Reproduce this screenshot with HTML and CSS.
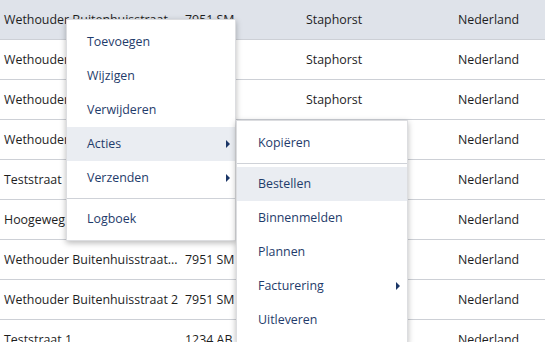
FILE: index.html
```html
<!DOCTYPE html>
<html>
<head>
  <link rel="stylesheet" href="styles.css">
</head>
<body>
  <div class="grid">
    <div class="row selected">
      <div class="cell street">Wethouder Buitenhuisstraat...</div>
      <div class="cell postcode">7951 SM</div>
      <div class="cell city">Staphorst</div>
      <div class="cell country">Nederland</div>
    </div>
    <div class="row">
      <div class="cell street">Wethouder Buitenhuisstraat 4</div>
      <div class="cell postcode">7951 SM</div>
      <div class="cell city">Staphorst</div>
      <div class="cell country">Nederland</div>
    </div>
    <div class="row">
      <div class="cell street">Wethouder Buitenhuisstraat 6</div>
      <div class="cell postcode">7951 SM</div>
      <div class="cell city">Staphorst</div>
      <div class="cell country">Nederland</div>
    </div>
    <div class="row">
      <div class="cell street">Wethouder Buitenhuisstraat 8</div>
      <div class="cell postcode">7951 SM</div>
      <div class="cell city">Staphorst</div>
      <div class="cell country">Nederland</div>
    </div>
    <div class="row">
      <div class="cell street">Teststraat 1</div>
      <div class="cell postcode">1234 AB</div>
      <div class="cell city">Teststad</div>
      <div class="cell country">Nederland</div>
    </div>
    <div class="row">
      <div class="cell street">Hoogeweg 12</div>
      <div class="cell postcode">7951 AA</div>
      <div class="cell city">Staphorst</div>
      <div class="cell country">Nederland</div>
    </div>
    <div class="row">
      <div class="cell street">Wethouder Buitenhuisstraat...</div>
      <div class="cell postcode">7951 SM</div>
      <div class="cell city">Staphorst</div>
      <div class="cell country">Nederland</div>
    </div>
    <div class="row">
      <div class="cell street">Wethouder Buitenhuisstraat 2</div>
      <div class="cell postcode">7951 SM</div>
      <div class="cell city">Staphorst</div>
      <div class="cell country">Nederland</div>
    </div>
    <div class="row">
      <div class="cell street">Teststraat  1</div>
      <div class="cell postcode">1234 AB</div>
      <div class="cell city">Teststad</div>
      <div class="cell country">Nederland</div>
    </div>
  </div>

  <ul class="menu main-menu">
    <li class="item">Toevoegen</li>
    <li class="item">Wijzigen</li>
    <li class="item">Verwijderen</li>
    <li class="item active has-sub">Acties</li>
    <li class="item has-sub">Verzenden</li>
    <li class="divider"></li>
    <li class="item">Logboek</li>
  </ul>

  <ul class="menu sub-menu">
    <li class="item">Kopiëren</li>
    <li class="divider"></li>
    <li class="item active">Bestellen</li>
    <li class="item">Binnenmelden</li>
    <li class="item">Plannen</li>
    <li class="item has-sub">Facturering</li>
    <li class="item">Uitleveren</li>
  </ul>
</body>
</html>
```

FILE: styles.css
```css
body {
  margin: 0;
  font-family: "Open Sans", Arial, sans-serif;
  font-size: 12.4px;
  color: #1e1e1e;
  background-color: white;
  overflow: hidden;
}

.row {
  display: grid;
  grid-template-columns: 181px 121px 152px 1fr;
  height: 39px;
  border-bottom: 1px solid #cdd0d6;
  align-items: center;
}

.row.selected {
  background-color: #dfe3ea;
}

.cell {
  padding-left: 4px;
  white-space: nowrap;
  overflow: hidden;
}

.menu {
  position: absolute;
  margin: 0;
  list-style: none;
  background-color: white;
  border: 1px solid #dcdde0;
  box-shadow: 0 2px 6px rgba(0, 0, 0, 0.28);
  color: #1f3c6b;
}

.main-menu {
  left: 66px;
  top: 19px;
  width: 168px;
  padding: 5px 0 4px;
}

.sub-menu {
  left: 236px;
  top: 120px;
  width: 170px;
  padding: 5px 0 6px;
}

.item {
  height: 34px;
  line-height: 33px;
  padding-left: 20px;
  position: relative;
}

.sub-menu .item {
  padding-left: 21px;
}

.item.active {
  background-color: #eaedf2;
}

.has-sub::after {
  content: "";
  position: absolute;
  right: 5px;
  top: 13px;
  border-left: 4px solid #1a3566;
  border-top: 4px solid transparent;
  border-bottom: 4px solid transparent;
}

.sub-menu .has-sub::after {
  right: 7px;
}

.divider {
  height: 1px;
  margin: 3px 0;
  background-color: #cfd2d8;
}
```
